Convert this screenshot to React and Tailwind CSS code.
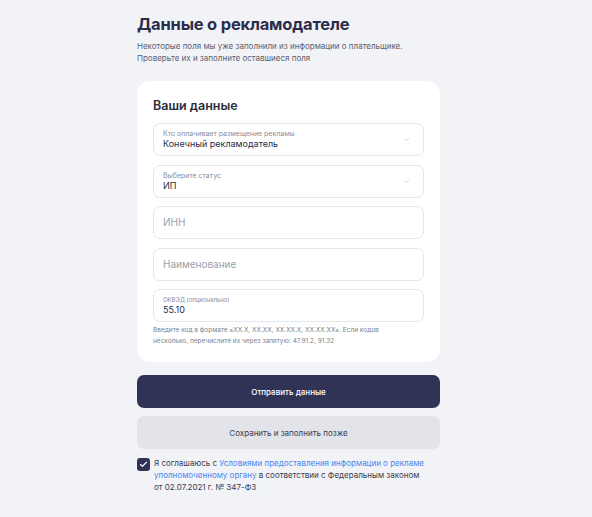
import { Check, ChevronDown } from 'lucide-react';

function SelectField({ label, value }) {
  return (
    <div className="flex h-[33px] items-center justify-between rounded-[7px] border border-[#e4e6ee] bg-white pl-[9px] pr-[12px]">
      <div className="flex flex-col">
        <span className="text-[7px] leading-[9px] text-[#8b8d9c]">{label}</span>
        <span className="text-[9px] leading-[12px] text-[#2b2c3a]">{value}</span>
      </div>
      <ChevronDown className="h-[9px] w-[9px] text-[#b5b7c2]" strokeWidth={1.5} />
    </div>
  );
}

function InputField({ placeholder }) {
  return (
    <div className="flex h-[33px] items-center rounded-[7px] border border-[#e4e6ee] bg-white px-[9px]">
      <span className="text-[10px] text-[#9c9eab]">{placeholder}</span>
    </div>
  );
}

export default function App() {
  return (
    <div className="min-h-[517px] bg-[#f2f3f7] font-['Inter',sans-serif]">
      <div className="ml-[137px] flex w-[303px] flex-col pt-[13px]">
        <h1 className="text-[16.5px] font-bold leading-[22px] tracking-[-0.2px] text-[#2b2d4b]">
          Данные о рекламодателе
        </h1>
        <p className="mt-[5px] text-[8px] leading-[12px] text-[#5c5e70]">
          Некоторые поля мы уже заполнили из информации о плательщике.
          <br />
          Проверьте их и заполните оставшиеся поля
        </p>

        <div className="mt-[17px] rounded-[13px] bg-white px-[16px] pb-[15px] pt-[17px]">
          <h2 className="text-[12.5px] font-semibold leading-[16px] text-[#2b2c3a]">Ваши данные</h2>
          <div className="mt-[9px] flex flex-col gap-[8.5px]">
            <SelectField label="Кто оплачивает размещение рекламы" value="Конечный рекламодатель" />
            <SelectField label="Выберите статус" value="ИП" />
            <InputField placeholder="ИНН" />
            <InputField placeholder="Наименование" />
            <div>
              <div className="flex h-[33px] flex-col justify-center rounded-[7px] border border-[#e4e6ee] bg-white px-[9px]">
                <span className="text-[6px] leading-[8px] text-[#8b8d9c]">ОКВЭД (опционально)</span>
                <span className="text-[9px] leading-[12px] text-[#2b2c3a]">55.10</span>
              </div>
              <p className="mt-[3px] text-[6.5px] leading-[11px] text-[#7d7f8d]">
                Введите код в формате «XX.X, XX.XX, XX.XX.X, XX.XX.XX». Если кодов
                <br />
                несколько, перечислите их через запятую: 47.91.2, 91.32
              </p>
            </div>
          </div>
        </div>

        <button className="mt-[13px] flex h-[33px] items-center justify-center rounded-[7px] bg-[#313356] text-[8px] font-medium text-white">
          Отправить данные
        </button>
        <button className="mt-[8px] flex h-[33px] items-center justify-center rounded-[7px] bg-[#e3e4ea] text-[8px] text-[#3a3c50]">
          Сохранить и заполнить позже
        </button>

        <div className="mt-[8px] flex items-start gap-[4px]">
          <div className="mt-[1px] flex h-[13px] w-[13px] shrink-0 items-center justify-center rounded-[3px] bg-[#313356]">
            <Check className="h-[9px] w-[9px] text-white" strokeWidth={3} />
          </div>
          <p className="text-[8px] leading-[12px] text-[#3a3c50]">
            Я соглашаюсь с{' '}
            <span className="text-[#4a86f0]">Условиями предоставления информации о рекламе</span>
            <br />
            <span className="text-[#4a86f0]">уполномоченному органу</span> в соответствии с Федеральным законом
            <br />
            от 02.07.2021 г. № 347-ФЗ
          </p>
        </div>
      </div>
    </div>
  );
}
